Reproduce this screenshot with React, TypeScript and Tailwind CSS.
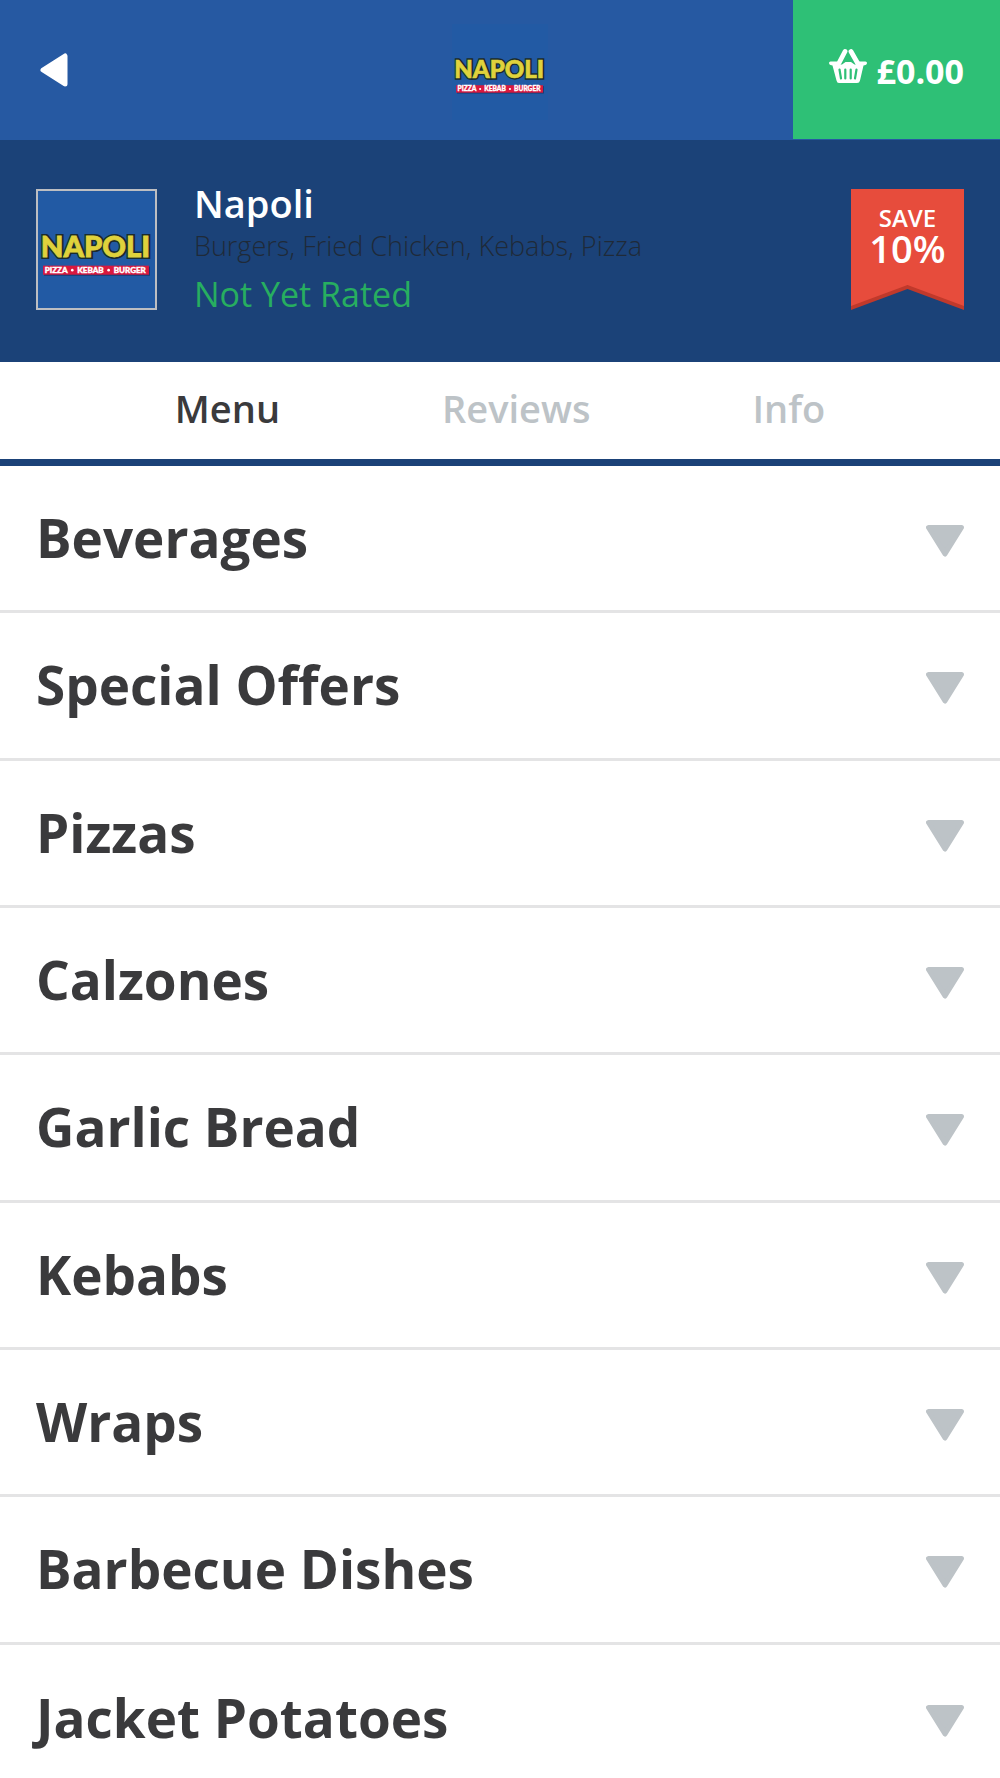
import { useState } from "react";

const categories = [
  "Beverages",
  "Special Offers",
  "Pizzas",
  "Calzones",
  "Garlic Bread",
  "Kebabs",
  "Wraps",
  "Barbecue Dishes",
  "Jacket Potatoes",
];

const tabs = ["Menu", "Reviews", "Info"];

function NapoliLogo({ className }: { className: string }) {
  return (
    <svg viewBox="0 0 116 116" role="img" aria-label="Napoli" className={className}>
      <rect width="116" height="116" fill="#225aa4" />
      <text
        x="57.500"
        y="65.500"
        textAnchor="middle"
        fontFamily="Lato, sans-serif"
        fontWeight="900"
        fontSize="29"
        fill="#1b2b2c"
        stroke="#1b2b2c"
        strokeWidth="4"
      >
        NAPOLI
      </text>
      <text
        x="57"
        y="65"
        textAnchor="middle"
        fontFamily="Lato, sans-serif"
        fontWeight="900"
        fontSize="29"
        fill="#dfd23c"
        stroke="#dfd23c"
        strokeWidth="0.8"
      >
        NAPOLI
      </text>
      <rect x="6" y="75" width="105" height="9" fill="#173a70" />
      <rect x="5" y="74" width="105" height="9" fill="#d9193f" />
      <g
        textAnchor="middle"
        fontFamily="Lato, sans-serif"
        fontWeight="900"
        fontSize="8"
        fill="#ffffff"
        stroke="#ffffff"
        strokeWidth="0.4"
      >
        <text x="18" y="81">PIZZA</text>
        <text x="52" y="81">KEBAB</text>
        <text x="91" y="81">BURGER</text>
      </g>
      <circle cx="34" cy="78.500" r="1.300" fill="#fff" />
      <circle cx="70" cy="78.500" r="1.300" fill="#fff" />
    </svg>
  );
}

function BackArrow() {
  return (
    <svg viewBox="0 0 28 34" className="h-[34px] w-7" aria-hidden="true">
      <path d="M3 17 25 3V31Z" fill="#fff" stroke="#fff" strokeWidth="5" strokeLinejoin="round" />
    </svg>
  );
}

function DownArrow() {
  return (
    <svg viewBox="0 0 38 32" className="h-8 w-[38px]" aria-hidden="true">
      <path
        d="M2.500 2.500H35.500L19 29Z"
        fill="#bdc3c7"
        stroke="#bdc3c7"
        strokeWidth="5"
        strokeLinejoin="round"
      />
    </svg>
  );
}

function Basket() {
  return (
    <svg viewBox="0 0 38 34" className="h-[34px] w-[38px]" aria-hidden="true">
      <path d="M16 2.500 10 14M22 2.500 28.500 14" stroke="#fff" strokeWidth="4.800" strokeLinecap="round" />
      <path
        d="M1.500 12.500H8.500L10 15.500H13L16.500 13H22L25.500 15.500H28.500L30 12.500H36.500Q38 12.500 38 14T36.500 16L34.500 16.500 31 31.500Q30.500 34 28 34H10Q8 34 7.500 31.500L3.500 16.500 1.500 16Q0 15.500 0 14T1.500 12.500Z"
        fill="#fff"
      />
      <path
        d="M10.500 20.500 12 29.500M16.300 20.500V29.500M21.700 20.500V29.500M27.500 20.500 26 29.500"
        stroke="#2ec076"
        strokeWidth="2.200"
        strokeLinecap="round"
      />
    </svg>
  );
}

export default function App() {
  const [tab, setTab] = useState("Menu");

  return (
    <div className="w-full bg-white font-['Open_Sans',sans-serif] text-[#3a3a3c]">
      <header className="grid h-[140px] grid-cols-[1fr_auto_1fr] bg-[#2659a2]">
        <button type="button" aria-label="Back" className="flex items-center justify-self-start pl-10">
          <BackArrow />
        </button>
        <NapoliLogo className="mt-1 size-24 self-center" />
        <button
          type="button"
          className="mb-px flex items-center gap-[10px] justify-self-end bg-[#2ec076] px-9 text-[34px] font-bold text-white"
        >
          <span className="pb-2">
            <Basket />
          </span>
          <span className="pt-1">£0.00</span>
        </button>
      </header>

      <section className="flex h-[222px] items-start bg-[#1b4278] px-9 pt-[49px]">
        <div className="mr-[37px] shrink-0 border-[2px] border-[#bdbec2]">
          <NapoliLogo className="size-[117px]" />
        </div>
        <div className="flex-1">
          <h1 className="text-[38px] leading-7 font-semibold text-white">Napoli</h1>
          <p className="mt-[11px] text-[27px] leading-9 font-light text-[#1f2a38]">
            Burgers, Fried Chicken, Kebabs, Pizza
          </p>
          <p className="mt-2 text-[34px] leading-11 text-[#27ae60]">Not Yet Rated</p>
        </div>
        <div className="relative w-[113px] shrink-0">
          <svg viewBox="0 0 113 121" className="w-full" aria-hidden="true">
            <path d="M0 0H113V121L56.500 100 0 121Z" fill="#c0392b" />
            <path d="M0 0H113V117L56.500 96 0 117Z" fill="#e74c3c" />
          </svg>
          <p className="absolute inset-x-0 top-2 text-center text-[38px] leading-[30px] font-semibold text-white">
            <span className="text-2xl leading-[30px]">SAVE</span>
            <br />
            10%
          </p>
        </div>
      </section>

      <nav className="flex h-[104px] justify-center gap-[162px] border-b-[7px] border-[#1b4278] pb-1">
        {tabs.map((name) => (
          <button
            key={name}
            type="button"
            onClick={() => setTab(name)}
            className={
              name === tab
                ? "text-[38px] font-semibold text-[#3a3a3c]"
                : "text-[38px] font-semibold text-[#bdc3c7]"
            }
          >
            {name}
          </button>
        ))}
      </nav>

      <ul className="grid min-h-[1326px] auto-rows-fr">
        {categories.map((name) => (
          <li key={name} className="flex border-b-[3px] border-[#e4e4e5] last:border-b-0">
            <button
              type="button"
              className="flex flex-1 items-center justify-between px-9 py-9 text-left text-[53px] leading-[72px] font-bold"
            >
              {name}
              <span className="pt-1.5">
                <DownArrow />
              </span>
            </button>
          </li>
        ))}
      </ul>
    </div>
  );
}
